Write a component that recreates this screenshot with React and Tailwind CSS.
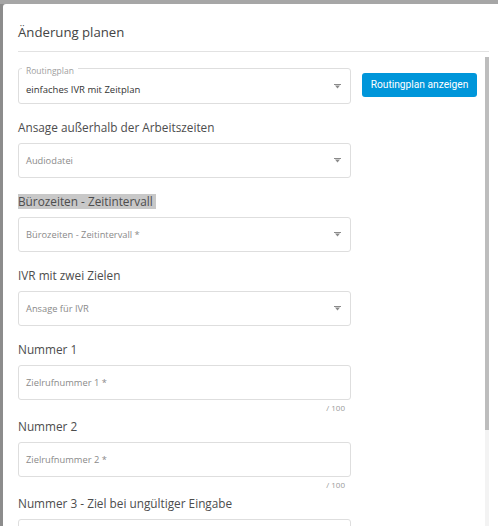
import React from 'react';

const body = { fontFamily: '"Open Sans", "Liberation Sans", sans-serif' };

function Arrow() {
  return (
    <svg width="7" height="5" viewBox="0 0 7 5" className="shrink-0">
      <rect x="0" y="0" width="7" height="1" fill="#8a8a8a" />
      <path d="M1 1.5h5L3.5 4.5z" fill="#8a8a8a" />
    </svg>
  );
}

function SelectBox({ placeholder }) {
  return (
    <div className="h-[35px] w-[333px] rounded-[3px] border border-[#dedede] flex items-center justify-between pl-[7px] pr-[9px]">
      <span className="text-[9.3px] text-[#8a8a8a]">{placeholder}</span>
      <Arrow />
    </div>
  );
}

function InputBox({ placeholder }) {
  return (
    <div>
      <div className="h-[35px] w-[333px] rounded-[3px] border border-[#dedede] flex items-center pl-[7px]">
        <span className="text-[9.3px] text-[#8a8a8a]">{placeholder}</span>
      </div>
      <div className="w-[327px] text-right text-[8px] leading-[12px] mt-[2px] text-[#9a9a9a]">/ 100</div>
    </div>
  );
}

function Label({ children, highlight }) {
  return (
    <div className="h-[15px] mb-[8px] flex">
      <span className={`text-[11.8px] leading-[15px] text-[#4d4d4d] ${highlight ? 'bg-[#c8c8c8] pr-[3px]' : ''}`}>{children}</span>
    </div>
  );
}

export default function App() {
  return (
    <div className="w-[498px] h-[526px] overflow-hidden bg-[#8c8c8c] relative" style={body}>
      <div className="absolute top-0 left-0 right-0 h-[4px] bg-[#a6a6a6]" />
      <div className="absolute top-[4px] left-[3px] right-0 bottom-0 bg-white rounded-tl-[3px]">
        <div className="pl-[15px] pt-[18px]">
          <div className="text-[13.2px] leading-[20px] text-[#444] h-[20px]">Änderung planen</div>
          <div className="mt-[9px] h-px w-[471px] bg-[#e2e2e2]" />

          <div className="mt-[16px] flex items-start">
            <div className="relative h-[36px] w-[333px] rounded-[3px] border border-[#dedede] flex items-center justify-between pl-[7px] pr-[9px] pt-[9px]">
              <span className="absolute -top-[3px] left-[3px] bg-white px-[4px] text-[8.5px] leading-[10px] text-[#a0a0a0]">Routingplan</span>
              <span className="text-[9.5px] text-[#333]">einfaches IVR mit Zeitplan</span>
              <div className="-mt-[9px]"><Arrow /></div>
            </div>
            <button className="ml-[11px] mt-[5px] h-[24px] w-[115px] rounded-[3px] bg-[#0096da] text-white text-[10.2px] flex items-center justify-center" style={{ fontFamily: 'Roboto, sans-serif' }}>
              Routingplan anzeigen
            </button>
          </div>

          <div className="mt-[16px]">
            <Label>Ansage außerhalb der Arbeitszeiten</Label>
            <SelectBox placeholder="Audiodatei" />
          </div>
          <div className="mt-[16px]">
            <Label highlight>Bürozeiten - Zeitintervall</Label>
            <SelectBox placeholder="Bürozeiten - Zeitintervall *" />
          </div>
          <div className="mt-[16px]">
            <Label>IVR mit zwei Zielen</Label>
            <SelectBox placeholder="Ansage für IVR" />
          </div>
          <div className="mt-[16px]">
            <Label>Nummer 1</Label>
            <InputBox placeholder="Zielrufnummer 1 *" />
          </div>
          <div className="mt-[5px]">
            <Label>Nummer 2</Label>
            <InputBox placeholder="Zielrufnummer 2 *" />
          </div>
          <div className="mt-[5px]">
            <Label>Nummer 3 - Ziel bei ungültiger Eingabe</Label>
            <div className="h-[35px] w-[333px] rounded-[3px] border border-[#dedede]" />
          </div>
        </div>

        <div className="absolute top-[53px] bottom-0 left-[482px] w-[4px] bg-[#f3f3f3]">
          <div className="h-[373px] bg-[#bdbdbd]" />
        </div>
      </div>
    </div>
  );
}
